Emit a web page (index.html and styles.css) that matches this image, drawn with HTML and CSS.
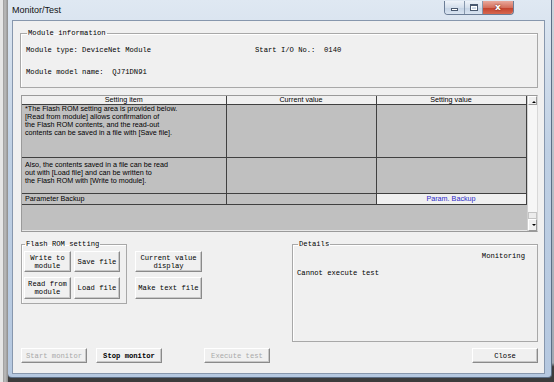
FILE: index.html
```html
<!DOCTYPE html>
<html lang="en">
<head>
  <meta charset="UTF-8">
  <meta name="viewport" content="width=device-width, initial-scale=1.0">
  <title>Monitor/Test</title>
  <link rel="stylesheet" href="styles.css">
</head>
<body>

  <div class="desk">
    <div class="desk-edge"></div>

    <div class="window">
      <div class="title-bar">
        <span class="title">Monitor/Test</span>
        <div class="caption-btns">
          <span class="cap cap-min"><i></i></span>
          <span class="cap cap-max"><i></i></span>
          <span class="cap cap-close">x</span>
        </div>
      </div>

      <div class="client">

        <!-- Module information -->
        <fieldset class="group module-info">
          <legend>Module information</legend>
          <div class="info-row">
            <span class="info-type">Module type: DeviceNet Module</span>
            <span>Start I/O No.:&nbsp; 0140</span>
          </div>
          <div class="info-row second">Module model name:&nbsp; QJ71DN91</div>
        </fieldset>

        <!-- Settings grid -->
        <div class="grid">
          <div class="grid-body">
            <table class="settings">
              <colgroup>
                <col class="c-item">
                <col class="c-cur">
                <col class="c-set">
              </colgroup>
              <thead>
                <tr><th>Setting item</th><th>Current value</th><th>Setting value</th></tr>
              </thead>
              <tbody>
                <tr class="row-note">
                  <td>*The Flash ROM setting area is provided below.<br>[Read from module] allows confirmation of<br>the Flash ROM contents, and the read-out<br>contents can be saved in a file with [Save file].</td>
                  <td></td>
                  <td></td>
                </tr>
                <tr class="row-note2">
                  <td>Also, the contents saved in a file can be read<br>out with [Load file] and can be written to<br>the Flash ROM with [Write to module].</td>
                  <td></td>
                  <td></td>
                </tr>
                <tr class="row-param">
                  <td>Parameter Backup</td>
                  <td></td>
                  <td class="param">Param. Backup</td>
                </tr>
              </tbody>
            </table>
          </div>
          <div class="vscroll">
            <span class="sb-btn sb-up"></span>
            <span class="sb-track"></span>
            <span class="sb-thumb"></span>
            <span class="sb-btn sb-down"></span>
          </div>
        </div>

        <div class="lower">
          <fieldset class="group flash">
            <legend>Flash ROM setting</legend>
            <div class="btn-grid">
              <button class="btn">Write to<br>module</button>
              <button class="btn">Save file</button>
              <button class="btn tall">Read from<br>module</button>
              <button class="btn tall">Load file</button>
            </div>
          </fieldset>

          <div class="side-btns">
            <button class="btn">Current value<br>display</button>
            <button class="btn tall">Make text file</button>
          </div>

          <fieldset class="group details">
            <legend>Details</legend>
            <div class="status">Monitoring</div>
            <div class="message">Cannot execute test</div>
          </fieldset>
        </div>

        <div class="bottom-bar">
          <button class="btn flat" disabled>Start monitor</button>
          <button class="btn flat strong">Stop monitor</button>
          <button class="btn flat exec" disabled>Execute test</button>
          <button class="btn flat close">Close</button>
        </div>

      </div>
    </div>
  </div>

</body>
</html>
```

FILE: styles.css
```css
* {
  box-sizing: border-box;
}

body {
  margin: 0;
  width: 554px;
  height: 382px;
  overflow: hidden;
  background: #e4e4e4;
  font-family: "Liberation Mono", "DejaVu Sans Mono", monospace;
  font-size: 7.2px;
  color: #000;
}

.desk {
  display: flex;
  height: 382px;
  background: linear-gradient(#cfd6dd, #9fa8b2 95%, #3c3c3c 96%);
}

.desk-edge {
  width: 8px;
  background: linear-gradient(90deg, #e6e6e6 0, #e6e6e6 3px, #9a9a9a 3px, #bdbdbd 5px, #8c8c8c 8px);
}

/* window frame */
.window {
  width: 544px;
  height: 378px;
  padding: 0 6px 3px 4px;
  background: linear-gradient(#dfe8f2, #bfd0e4 40%, #b5c8e0);
  border-right: 1px solid #5d6f86;
  border-bottom: 1px solid #5d6f86;
  border-radius: 0 0 4px 4px;
  display: flex;
  flex-direction: column;
}

.title-bar {
  height: 20px;
  display: flex;
  align-items: flex-start;
}

.title {
  font-family: "Liberation Sans", Arial, sans-serif;
  font-size: 9px;
  margin-top: 5px;
  color: #111;
}

.caption-btns {
  display: flex;
  margin-left: auto;
  margin-right: 31px;
  margin-top: 1px;
  height: 14px;
  border: 1px solid #6b7d96;
  border-top: none;
  border-radius: 0 0 4px 4px;
  overflow: hidden;
}

.cap {
  display: flex;
  align-items: center;
  justify-content: center;
  background: linear-gradient(#eef3f9, #d4dfec 50%, #c3d2e4 51%, #d9e4f1);
  border-right: 1px solid #8898ad;
}

.cap-min {
  width: 20px;
}

.cap-min i {
  width: 7px;
  height: 3px;
  margin-top: 4px;
  background: #fff;
  border: 1px solid #4a5a70;
}

.cap-max {
  width: 18px;
}

.cap-max i {
  width: 8px;
  height: 7px;
  border: 1px solid #4a5a70;
  border-top-width: 2px;
  box-shadow: inset 0 0 0 1px #fff;
}

.cap-close {
  width: 30px;
  border-right: none;
  background: linear-gradient(#e9a99c, #d4705d 50%, #c2402b 51%, #d6674f);
  color: #fff;
  font-family: "DejaVu Sans", sans-serif;
  font-weight: bold;
  font-size: 9px;
  line-height: 1;
  text-shadow: 0 0 2px #5a1a10;
}

/* client area */
.client {
  flex: 1;
  background: #f0f0f0;
  border: 1px solid #8797ad;
  display: flex;
  flex-direction: column;
  padding: 0 6px 0 7px;
}

.group {
  margin: 0;
  border: 1px solid #a8a8a8;
  box-shadow: inset 1px 1px 0 #fff;
}

.group legend {
  padding: 0 1px;
  margin-left: 1px;
  line-height: 8px;
}

.module-info {
  margin-top: 8px;
  height: 59px;
  padding: 9px 5px 0;
}

.info-row {
  display: flex;
  line-height: 8px;
}

.info-type {
  width: 229px;
}

.info-row.second {
  margin-top: 14px;
}

/* settings grid */
.grid {
  margin: 7px 0 0 1px;
  height: 137px;
  display: flex;
  border: 1px solid #9a9a9a;
  border-right-color: #d8d8d8;
}

.grid-body {
  flex: 1;
  background: #c0c0c0;
  border-bottom: 1px solid #e8e8e8;
}

.settings {
  border-collapse: collapse;
  table-layout: fixed;
  width: 504px;
  font-family: "Liberation Sans", Arial, sans-serif;
  font-size: 7.2px;
  line-height: 8px;
}

.c-item { width: 204px; }
.c-cur { width: 150px; }
.c-set { width: 150px; }

.settings th {
  font-weight: normal;
  height: 8px;
  padding: 0;
  background: #f0f0f0;
  border-right: 1px solid #404040;
  border-bottom: 1px solid #404040;
}

.settings td {
  padding: 0 3px;
  vertical-align: top;
  white-space: nowrap;
  border-right: 1px solid #404040;
  border-bottom: 1px solid #404040;
}

.row-note td {
  height: 53px;
}

.row-note2 td {
  height: 36px;
  padding-top: 3px;
}

.row-param td {
  height: 11px;
  padding-top: 1px;
}

.settings td.param {
  text-align: center;
  color: #2a2ac8;
  background: #f0f0f0;
  border-left: 1px solid #404040;
}

.vscroll {
  width: 12px;
  display: flex;
  flex-direction: column;
  background: #f6f6f6;
  border-left: 1px solid #d0d0d0;
}

.sb-btn {
  height: 9px;
  position: relative;
  background: #f0f0f0;
  border: 1px solid;
  border-color: #fff #9a9a9a #9a9a9a #fff;
}

.sb-down {
  height: 12px;
}

.sb-btn::after {
  content: "";
  position: absolute;
  left: 3px;
  top: 2px;
  border: 2px solid transparent;
  border-bottom: 2px solid #000;
}

.sb-down::after {
  top: 4px;
  border-bottom-color: transparent;
  border-top: 2px solid #000;
}

.sb-track {
  flex: 1;
}

.sb-thumb {
  height: 7px;
  background: #ececec;
  border: 1px solid #c4c4c4;
}

/* lower controls */
.lower {
  display: flex;
  align-items: flex-start;
  margin-top: 8px;
}

.flash {
  width: 106px;
  margin-left: 1px;
  padding: 3px 2px 4px;
}

.btn-grid {
  display: grid;
  grid-template-columns: 47px 46px;
  grid-template-rows: 21px 22px;
  column-gap: 3px;
  row-gap: 5px;
}

.btn {
  font-family: "Liberation Mono", "DejaVu Sans Mono", monospace;
  font-size: 7.2px;
  line-height: 8px;
  color: #000;
  padding: 0;
  background: #f0f0f0;
  border: 1px solid;
  border-color: #fff #8a8a8a #8a8a8a #fff;
  box-shadow: inset -1px -1px 0 #c8c8c8;
}

.side-btns {
  display: grid;
  grid-template-rows: 21px 22px;
  row-gap: 5px;
  width: 67px;
  margin: 11px 0 0 8px;
}

.details {
  width: 246px;
  height: 102px;
  margin-left: auto;
  padding: 4px 12px 0 4px;
}

.status {
  text-align: right;
  line-height: 8px;
}

.message {
  margin-top: 9px;
  line-height: 8px;
}

/* bottom row */
.bottom-bar {
  display: flex;
  margin: 6px 0 0 1px;
}

.btn.flat {
  width: 66px;
  height: 15px;
  margin-right: 9px;
}

.btn.flat:disabled {
  color: #a9a9a9;
}

.btn.strong {
  font-weight: bold;
}

.btn.exec {
  margin-left: 33px;
}

.btn.close {
  margin: 0 0 0 auto;
}
```
